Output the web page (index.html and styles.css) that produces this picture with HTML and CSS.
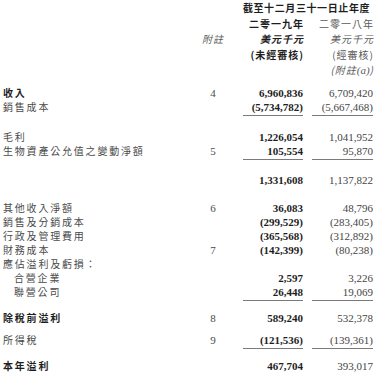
FILE: index.html
```html
<!DOCTYPE html>
<html lang="zh-Hant">
<head>
<meta charset="utf-8">
<title>綜合損益表</title>
<link rel="stylesheet" href="styles.css">
</head>
<body>
<div class="sheet">
  <div class="head">
    <div class="row hrow">
      <span></span><span></span>
      <span class="span2 cjk b center title">截至十二月三十一日止年度</span>
    </div>
    <div class="row hrow">
      <span></span><span></span>
      <span class="num"><span class="cjk b tr">二零一九年</span></span>
      <span class="num"><span class="cjk light tr">二零一八年</span></span>
    </div>
    <div class="row hrow">
      <span></span>
      <span class="note"><span class="cjk it light">附註</span></span>
      <span class="num"><span class="cjk b it tr">美元千元</span></span>
      <span class="num"><span class="cjk it light tr">美元千元</span></span>
    </div>
    <div class="row hrow">
      <span></span><span></span>
      <span class="num"><span class="cjk b tr">(未經審核)</span></span>
      <span class="num"><span class="cjk light tr">(經審核)</span></span>
    </div>
    <div class="row hrow">
      <span></span><span></span><span></span>
      <span class="num"><span class="cjk it light tr">(附註<i class="lat">(a)</i>)</span></span>
    </div>
  </div>

  <div class="body">
    <div class="row mt8">
      <span class="lbl b">收入</span><span class="note">4</span>
      <span class="num c1"><span class="v">6,960,836</span></span>
      <span class="num c2"><span class="v">6,709,420</span></span>
    </div>
    <div class="row ul">
      <span class="lbl">銷售成本</span><span class="note"></span>
      <span class="num c1"><span class="v">(5,734,782)</span></span>
      <span class="num c2"><span class="v">(5,667,468)</span></span>
    </div>

    <div class="row mt16">
      <span class="lbl">毛利</span><span class="note"></span>
      <span class="num c1"><span class="v">1,226,054</span></span>
      <span class="num c2"><span class="v">1,041,952</span></span>
    </div>
    <div class="row ul">
      <span class="lbl">生物資產公允值之變動淨額</span><span class="note">5</span>
      <span class="num c1"><span class="v">105,554</span></span>
      <span class="num c2"><span class="v">95,870</span></span>
    </div>

    <div class="row mt15">
      <span class="lbl"></span><span class="note"></span>
      <span class="num c1"><span class="v">1,331,608</span></span>
      <span class="num c2"><span class="v">1,137,822</span></span>
    </div>

    <div class="row mt14">
      <span class="lbl">其他收入淨額</span><span class="note">6</span>
      <span class="num c1"><span class="v">36,083</span></span>
      <span class="num c2"><span class="v">48,796</span></span>
    </div>
    <div class="row">
      <span class="lbl">銷售及分銷成本</span><span class="note"></span>
      <span class="num c1"><span class="v">(299,529)</span></span>
      <span class="num c2"><span class="v">(283,405)</span></span>
    </div>
    <div class="row">
      <span class="lbl">行政及管理費用</span><span class="note"></span>
      <span class="num c1"><span class="v">(365,568)</span></span>
      <span class="num c2"><span class="v">(312,892)</span></span>
    </div>
    <div class="row">
      <span class="lbl">財務成本</span><span class="note">7</span>
      <span class="num c1"><span class="v">(142,399)</span></span>
      <span class="num c2"><span class="v">(80,238)</span></span>
    </div>
    <div class="row">
      <span class="lbl">應佔溢利及虧損：</span><span class="note"></span>
      <span class="num c1"></span><span class="num c2"></span>
    </div>
    <div class="row">
      <span class="lbl indent">合營企業</span><span class="note"></span>
      <span class="num c1"><span class="v">2,597</span></span>
      <span class="num c2"><span class="v">3,226</span></span>
    </div>
    <div class="row ul">
      <span class="lbl indent">聯營公司</span><span class="note"></span>
      <span class="num c1"><span class="v">26,448</span></span>
      <span class="num c2"><span class="v">19,069</span></span>
    </div>

    <div class="row mt12">
      <span class="lbl b">除稅前溢利</span><span class="note">8</span>
      <span class="num c1"><span class="v">589,240</span></span>
      <span class="num c2"><span class="v">532,378</span></span>
    </div>
    <div class="row ul mt8">
      <span class="lbl">所得稅</span><span class="note">9</span>
      <span class="num c1"><span class="v">(121,536)</span></span>
      <span class="num c2"><span class="v">(139,361)</span></span>
    </div>

    <div class="row ul mt12">
      <span class="lbl b">本年溢利</span><span class="note"></span>
      <span class="num c1"><span class="v">467,704</span></span>
      <span class="num c2"><span class="v">393,017</span></span>
    </div>
  </div>
</div>
</body>
</html>
```

FILE: styles.css
```css
html, body {
  margin: 0;
  padding: 0;
  background: #ffffff;
}

.sheet {
  padding: 0 5px 0 3px;
  font-family: "Liberation Serif", "Noto Sans CJK TC", serif;
  font-size: 11px;
  color: #3a3a3a;
}

.row {
  display: grid;
  grid-template-columns: 195px 30px 75px 70px;
  height: 14px;
  line-height: 14px;
  white-space: nowrap;
}

.hrow {
  height: 15.5px;
  line-height: 15.5px;
}

.span2 {
  grid-column: 3 / 5;
}

.center {
  text-align: center;
  padding-left: 12px;
}

.cjk {
  font-family: "Noto Sans CJK TC", sans-serif;
  font-size: 10px;
  letter-spacing: 1px;
}

.title {
  letter-spacing: 0.6px;
}

.tr {
  margin-right: -1px;
}

.lat {
  font-family: "Liberation Serif", serif;
  font-size: 11px;
  letter-spacing: 0;
}

.b {
  font-weight: 700;
  color: #1e1e1e;
}

.light {
  color: #5a5a5a;
}

.it {
  font-style: italic;
}

.lbl {
  font-family: "Noto Sans CJK TC", sans-serif;
  font-size: 10px;
  letter-spacing: 1.8px;
  color: #4a4a4a;
}

.lbl.b {
  color: #1e1e1e;
}

.indent {
  padding-left: 11px;
}

.note {
  text-align: center;
  color: #4a4a4a;
}

.num {
  text-align: right;
}

.v {
  display: block;
  height: 14px;
  margin-left: auto;
  text-align: right;
  box-sizing: border-box;
}

.c1 .v {
  width: 60px;
  font-weight: 700;
  color: #1e1e1e;
}

.c2 .v {
  width: 61px;
  color: #454545;
}

.ul .v {
  height: 16px;
  margin-bottom: -2px;
  border-bottom: 1px solid #7a7a7a;
}

.mt8 { margin-top: 8px; }
.mt12 { margin-top: 12px; }
.mt14 { margin-top: 14px; }
.mt15 { margin-top: 15px; }
.mt16 { margin-top: 16px; }
```
